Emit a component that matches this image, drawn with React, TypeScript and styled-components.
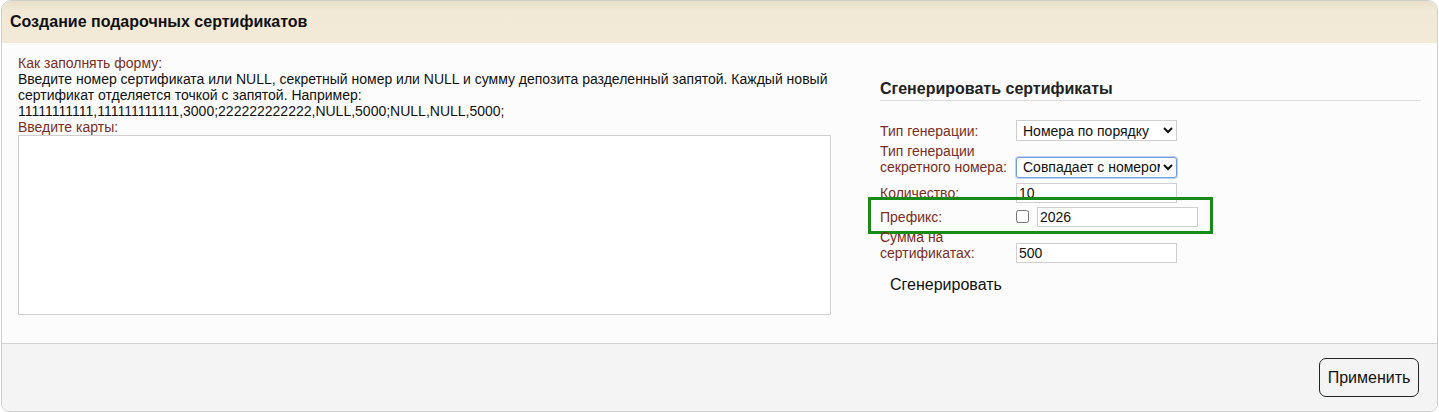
import React from "react";
import styled, { createGlobalStyle } from "styled-components";

const Global = createGlobalStyle`
  html, body { margin: 0; padding: 0; background: #ffffff; }
  body { font-family: "Liberation Sans", Arial, sans-serif; font-size: 14px; color: #111; }
`;

const Page = styled.div`
  padding-left: 1px;
  width: 1438px;
  box-sizing: border-box;
`;

const Panel = styled.section`
  border: 1px solid #cfcfcf;
  border-radius: 10px 10px 8px 8px;
  overflow: hidden;
  background: #fcfcfc;
`;

const Header = styled.header`
  height: 42px;
  display: flex;
  align-items: center;
  padding-left: 8px;
  background: linear-gradient(#e8dfca 0px, #f1e9d5 9px, #f2ead6 100%);
`;

const Title = styled.h1`
  margin: 0;
  font-size: 16px;
  font-weight: bold;
  color: #111;
`;

const Body = styled.div`
  display: flex;
  gap: 49px;
  padding: 12px 16px 28px 16px;
  background: #fcfcfc;
`;

const LeftCol = styled.div`
  width: 813px;
  line-height: 16px;
`;

const Label = styled.div`
  color: #7a2e1e;
`;

const Text = styled.div`
  color: #111;
`;

const CardsArea = styled.textarea`
  display: block;
  width: 813px;
  height: 180px;
  box-sizing: border-box;
  border: 1px solid #cfcfcf;
  background: #fff;
  resize: none;
  margin: 0;
  padding: 2px;
  font-family: "Liberation Mono", monospace;
`;

const RightCol = styled.div`
  width: 542px;
  padding-top: 24px;
`;

const SubTitle = styled.h2`
  margin: 0;
  font-size: 16px;
  font-weight: bold;
  line-height: 19px;
  color: #222;
  padding-bottom: 2px;
  border-bottom: 1px solid #dedede;
`;

const Form = styled.div`
  padding-top: 19px;
  display: flex;
  flex-direction: column;
  align-items: flex-start;
`;

const Row = styled.div<{ $gap: number; $highlight?: boolean }>`
  display: flex;
  align-items: last baseline;
  margin-top: ${(p) => p.$gap}px;
  position: relative;
  ${(p) =>
    p.$highlight &&
    `
    &::after {
      content: "";
      position: absolute;
      top: -10px;
      left: -12px;
      right: -15px;
      bottom: -7px;
      border: 3px solid #178a17;
      pointer-events: none;
    }
  `}
`;

const RowLabel = styled.label`
  width: 136px;
  flex: none;
  color: #7a2e1e;
  line-height: 16px;
`;

const Controls = styled.div`
  display: flex;
  align-items: center;
  gap: 8px;
`;

const Select = styled.select<{ $focused?: boolean }>`
  width: 161px;
  height: 21px;
  box-sizing: border-box;
  margin: 0;
  font-family: "Liberation Sans", Arial, sans-serif;
  font-size: 14px;
  color: #111;
  background: #fff;
  border: 1px solid ${(p) => (p.$focused ? "#6f9ee3" : "#cfcfcf")};
  border-radius: ${(p) => (p.$focused ? "3px" : "0")};
  box-shadow: ${(p) => (p.$focused ? "0 0 0 1px rgba(120,160,230,0.45)" : "none")};
  padding: 0 0 0 2px;
`;

const Input = styled.input`
  width: 161px;
  height: 20px;
  box-sizing: border-box;
  margin: 0;
  padding: 0 2px;
  font-family: "Liberation Sans", Arial, sans-serif;
  font-size: 14px;
  color: #111;
  background: #fff;
  border: 1px solid #cfcfcf;
`;

const Check = styled.input`
  width: 13px;
  height: 13px;
  margin: 0;
`;

const GenButton = styled.button`
  margin-top: 9px;
  padding: 4px 10px;
  border: none;
  background: transparent;
  font-family: "Liberation Sans", Arial, sans-serif;
  font-size: 16px;
  color: #111;
  cursor: pointer;
`;

const Footer = styled.footer`
  display: flex;
  justify-content: flex-end;
  padding: 14px 18px 14px 0;
  background: #f4f4f4;
  border-top: 1px solid #d2d2d2;
`;

const ApplyButton = styled.button`
  width: 100px;
  height: 39px;
  border: 1px solid #222;
  border-radius: 7px;
  background: #f4f4f4;
  font-family: "Liberation Sans", Arial, sans-serif;
  font-size: 16px;
  color: #111;
  cursor: pointer;
`;

export default function App() {
  return (
    <Page>
      <Global />
      <Panel>
        <Header>
          <Title>Создание подарочных сертификатов</Title>
        </Header>
        <Body>
          <LeftCol>
            <Label>Как заполнять форму:</Label>
            <Text>
              Введите номер сертификата или NULL, секретный номер или NULL и сумму депозита разделенный запятой. Каждый новый сертификат отделяется точкой с запятой. Например:
            </Text>
            <Text>11111111111,111111111111,3000;222222222222,NULL,5000;NULL,NULL,5000;</Text>
            <Label>Введите карты:</Label>
            <CardsArea />
          </LeftCol>
          <RightCol>
            <SubTitle>Сгенерировать сертификаты</SubTitle>
            <Form>
              <Row $gap={0}>
                <RowLabel>Тип генерации:</RowLabel>
                <Select defaultValue="order">
                  <option value="order">Номера по порядку</option>
                  <option value="random">Случайные номера</option>
                </Select>
              </Row>
              <Row $gap={2}>
                <RowLabel>
                  Тип генерации
                  <br />
                  секретного номера:
                </RowLabel>
                <Select $focused defaultValue="same">
                  <option value="same">Совпадает с номером</option>
                  <option value="random">Случайный</option>
                </Select>
              </Row>
              <Row $gap={5}>
                <RowLabel>Количество:</RowLabel>
                <Input defaultValue="10" />
              </Row>
              <Row $gap={4} $highlight>
                <RowLabel>Префикс:</RowLabel>
                <Controls>
                  <Check type="checkbox" />
                  <Input defaultValue="2026" />
                </Controls>
              </Row>
              <Row $gap={2}>
                <RowLabel>
                  Сумма на
                  <br />
                  сертификатах:
                </RowLabel>
                <Input defaultValue="500" />
              </Row>
              <GenButton>Сгенерировать</GenButton>
            </Form>
          </RightCol>
        </Body>
        <Footer>
          <ApplyButton>Применить</ApplyButton>
        </Footer>
      </Panel>
    </Page>
  );
}
